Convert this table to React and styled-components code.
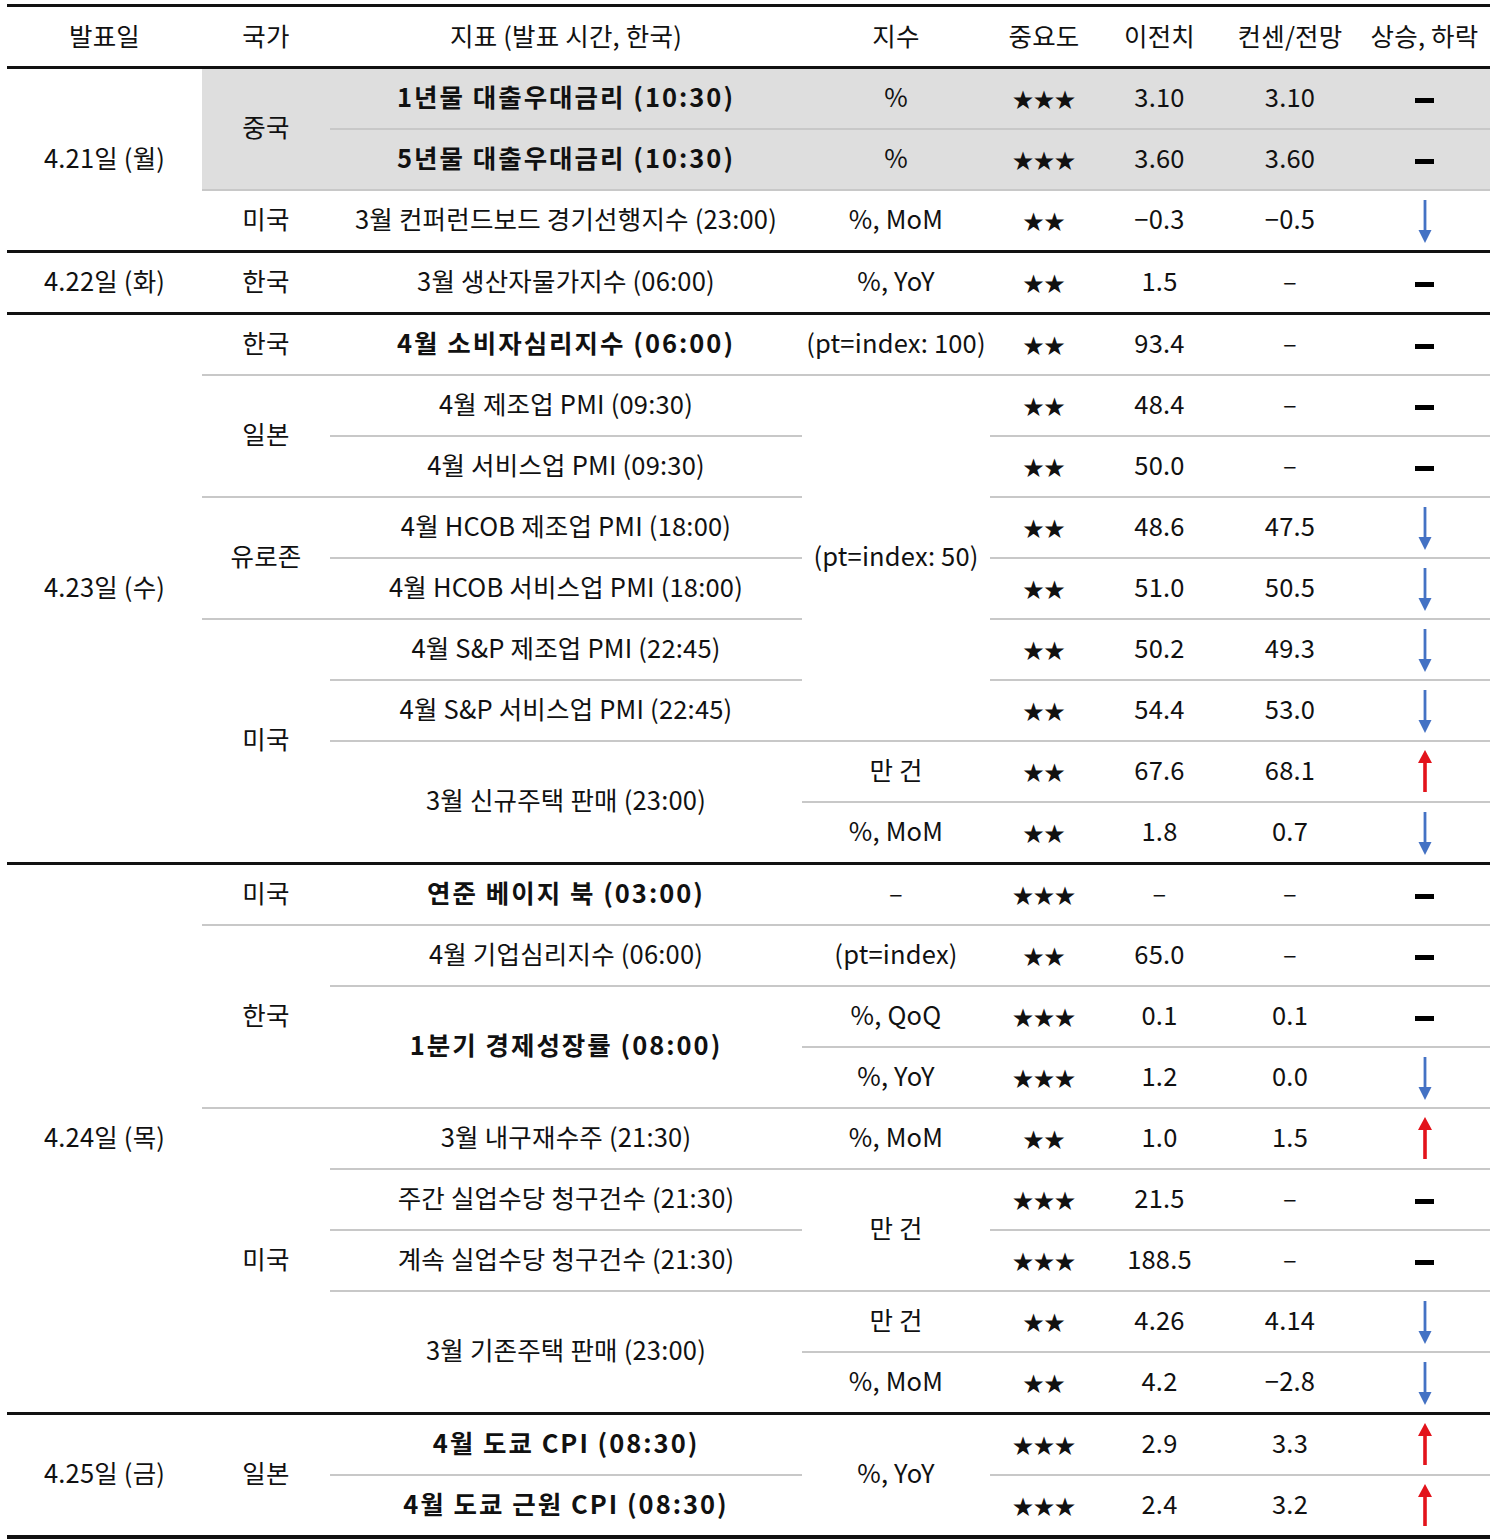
import React from "react";
import styled, { createGlobalStyle, css } from "styled-components";

const Global = createGlobalStyle`
  html, body { margin: 0; padding: 0; background: #fff; }
  body { font-family: "Noto Sans CJK KR", "Noto Sans", sans-serif; color: #111; }
`;

const Page = styled.div`
  padding: 4px 0 0 7px;
  width: 1497px;
  box-sizing: border-box;
`;

const Table = styled.table`
  border-collapse: collapse;
  table-layout: fixed;
  width: 1483px;
  border-bottom: 4px solid #111;
`;

const HeadCell = styled.th`
  height: 56px;
  padding: 0 0 3px;
  font-weight: 400;
  font-size: 25.5px;
  line-height: 1.2;
  text-align: center;
  vertical-align: middle;
  white-space: nowrap;
  border-top: 3px solid #111;
  border-bottom: 3px solid #111;
  letter-spacing: 0.2px;
`;

const Cell = styled.td`
  height: 54px;
  padding: 0 0 5px;
  font-size: 25.5px;
  line-height: 1.2;
  font-weight: ${(p) => (p.$bold ? 700 : 400)};
  letter-spacing: ${(p) => (p.$bold ? "2px" : "0.2px")};
  text-align: center;
  vertical-align: middle;
  white-space: nowrap;
  background: ${(p) => (p.$shade ? "#dedede" : "#fff")};
  ${(p) =>
    p.$top === "thick"
      ? css`border-top: 3px solid #111;`
      : css`border-top: 2px solid #c8c8c8;`}
`;

const Stars = styled.span`
  font-size: 21px;
  letter-spacing: 0;
`;

const Dash = styled.span`
  display: inline-block;
  width: 19px;
  height: 5px;
  background: #000;
  vertical-align: middle;
  margin-top: 2px;
`;

const ArrowBox = styled.span`
  display: inline-flex;
  vertical-align: middle;
  margin-top: 5px;
`;

function Arrow({ dir }) {
  const up = dir === "up";
  const color = up ? "#e3131b" : "#4472c4";
  return (
    <ArrowBox>
      <svg width="16" height="44" viewBox="0 0 16 44">
        {up ? (
          <>
            <line x1="8" y1="10" x2="8" y2="42" stroke={color} strokeWidth="3.6" />
            <polygon points="1,13 15,13 8,0" fill={color} />
          </>
        ) : (
          <>
            <line x1="8" y1="1" x2="8" y2="34" stroke={color} strokeWidth="2.8" />
            <polygon points="1.5,31 14.5,31 8,44" fill={color} />
          </>
        )}
      </svg>
    </ArrowBox>
  );
}

const widths = [195, 128, 472, 188, 108, 123, 138, 131];

const headers = ["발표일", "국가", "지표 (발표 시간, 한국)", "지수", "중요도", "이전치", "컨센/전망", "상승, 하락"];

const c = (v, rs, b) => ({ v, rs, b });

const rows = [
  { group: true, shade: true, cells: [c("4.21일 (월)", 3), c("중국", 2), c("1년물 대출우대금리 (10:30)", 1, true), c("%"), c("***"), c("3.10"), c("3.10"), c("dash")] },
  { shade: true, cells: [c("5년물 대출우대금리 (10:30)", 1, true), c("%"), c("***"), c("3.60"), c("3.60"), c("dash")] },
  { cells: [c("미국"), c("3월 컨퍼런드보드 경기선행지수 (23:00)"), c("%, MoM"), c("**"), c("−0.3"), c("−0.5"), c("down")] },
  { group: true, cells: [c("4.22일 (화)"), c("한국"), c("3월 생산자물가지수 (06:00)"), c("%, YoY"), c("**"), c("1.5"), c("–"), c("dash")] },
  { group: true, cells: [c("4.23일 (수)", 9), c("한국"), c("4월 소비자심리지수 (06:00)", 1, true), c("(pt=index: 100)"), c("**"), c("93.4"), c("–"), c("dash")] },
  { cells: [c("일본", 2), c("4월 제조업 PMI (09:30)"), c("(pt=index: 50)", 6), c("**"), c("48.4"), c("–"), c("dash")] },
  { cells: [c("4월 서비스업 PMI (09:30)"), c("**"), c("50.0"), c("–"), c("dash")] },
  { cells: [c("유로존", 2), c("4월 HCOB 제조업 PMI (18:00)"), c("**"), c("48.6"), c("47.5"), c("down")] },
  { cells: [c("4월 HCOB 서비스업 PMI (18:00)"), c("**"), c("51.0"), c("50.5"), c("down")] },
  { cells: [c("미국", 4), c("4월 S&P 제조업 PMI (22:45)"), c("**"), c("50.2"), c("49.3"), c("down")] },
  { cells: [c("4월 S&P 서비스업 PMI (22:45)"), c("**"), c("54.4"), c("53.0"), c("down")] },
  { cells: [c("3월 신규주택 판매 (23:00)", 2), c("만 건"), c("**"), c("67.6"), c("68.1"), c("up")] },
  { cells: [c("%, MoM"), c("**"), c("1.8"), c("0.7"), c("down")] },
  { group: true, cells: [c("4.24일 (목)", 9), c("미국"), c("연준 베이지 북 (03:00)", 1, true), c("–"), c("***"), c("–"), c("–"), c("dash")] },
  { cells: [c("한국", 3), c("4월 기업심리지수 (06:00)"), c("(pt=index)"), c("**"), c("65.0"), c("–"), c("dash")] },
  { cells: [c("1분기 경제성장률 (08:00)", 2, true), c("%, QoQ"), c("***"), c("0.1"), c("0.1"), c("dash")] },
  { cells: [c("%, YoY"), c("***"), c("1.2"), c("0.0"), c("down")] },
  { cells: [c("미국", 5), c("3월 내구재수주 (21:30)"), c("%, MoM"), c("**"), c("1.0"), c("1.5"), c("up")] },
  { cells: [c("주간 실업수당 청구건수 (21:30)"), c("만 건", 2), c("***"), c("21.5"), c("–"), c("dash")] },
  { cells: [c("계속 실업수당 청구건수 (21:30)"), c("***"), c("188.5"), c("–"), c("dash")] },
  { cells: [c("3월 기존주택 판매 (23:00)", 2), c("만 건"), c("**"), c("4.26"), c("4.14"), c("down")] },
  { cells: [c("%, MoM"), c("**"), c("4.2"), c("−2.8"), c("down")] },
  { group: true, cells: [c("4.25일 (금)", 2), c("일본", 2), c("4월 도쿄 CPI (08:30)", 1, true), c("%, YoY", 2), c("***"), c("2.9"), c("3.3"), c("up")] },
  { cells: [c("4월 도쿄 근원 CPI (08:30)", 1, true), c("***"), c("2.4"), c("3.2"), c("up")] },
];

function renderValue(v) {
  if (v === "***") return <Stars>★★★</Stars>;
  if (v === "**") return <Stars>★★</Stars>;
  if (v === "dash") return <Dash />;
  if (v === "up" || v === "down") return <Arrow dir={v} />;
  return v;
}

export default function App() {
  return (
    <Page>
      <Global />
      <Table>
        <colgroup>
          {widths.map((w, i) => (
            <col key={i} style={{ width: w }} />
          ))}
        </colgroup>
        <thead>
          <tr>
            {headers.map((h) => (
              <HeadCell key={h}>{h}</HeadCell>
            ))}
          </tr>
        </thead>
        <tbody>
          {rows.map((r, ri) => (
            <tr key={ri}>
              {r.cells.map((cell, ci) => (
                <Cell
                  key={ci}
                  rowSpan={cell.rs || 1}
                  $bold={cell.b}
                  $top={r.group ? "thick" : "thin"}
                  $shade={r.shade && !(r.group && ci === 0)}
                >
                  {renderValue(cell.v)}
                </Cell>
              ))}
            </tr>
          ))}
        </tbody>
      </Table>
    </Page>
  );
}
